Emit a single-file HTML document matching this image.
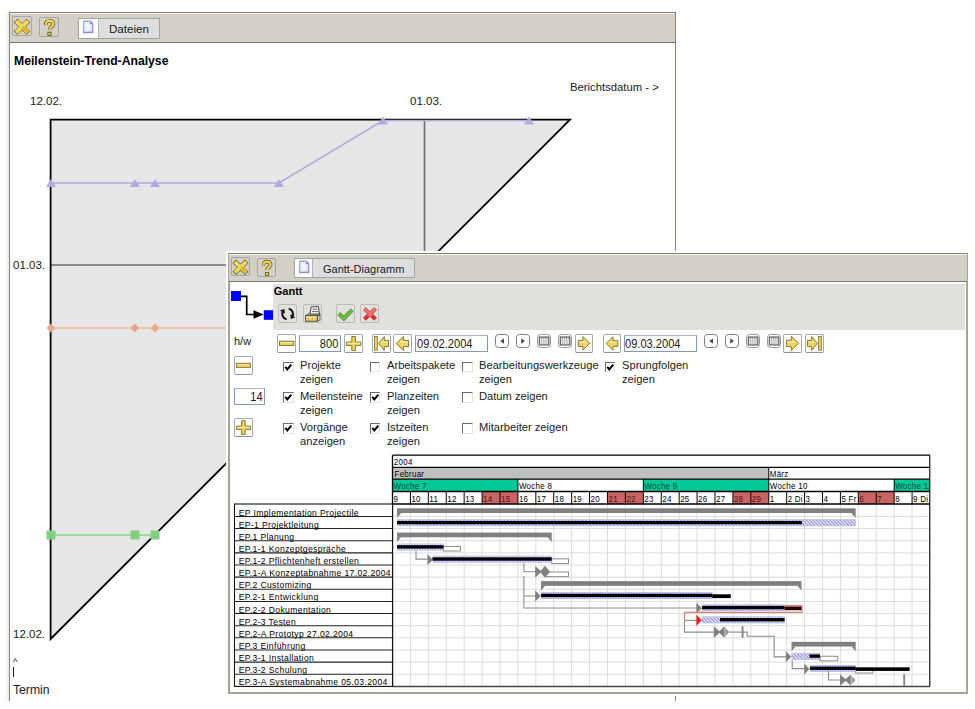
<!DOCTYPE html><html><head><meta charset="utf-8"><style>
*{margin:0;padding:0;box-sizing:border-box}
html,body{width:975px;height:709px;overflow:hidden;background:#fff;font-family:"Liberation Sans",sans-serif;color:#000}
.a{position:absolute}
.tb{background:#d4d0c8}
.btn{position:absolute;border:1px solid #a8a69c;border-radius:2px;background:#d4d0c8}
.t{position:absolute;white-space:nowrap;line-height:1}
svg{position:absolute;left:0;top:0}
</style></head><body>
<div class="a" style="left:9px;top:12px;width:667px;height:689px;border:1px solid #858270;border-left:1.3px solid #8a887a;border-bottom:none;background:#fff"></div><div class="a" style="left:5px;top:12px;width:4px;height:689px;background:linear-gradient(to right,#fdfdfd,#f2f2f2 60%,#e4e4e2)"></div>
<div class="a tb" style="left:10px;top:13px;width:665px;height:30px;border-top:1px solid #f4f2ee;border-bottom:1px solid #7c7a68"></div>
<div class="btn" style="left:12px;top:16px;width:20px;height:20px"></div>
<svg class="a" style="left:12px;top:16px" width="20" height="20" viewBox="0 0 20 20"><path d="M3.6 4.6 L16.4 17 M16.4 4.6 L3.6 17" stroke="#5c5424" stroke-width="5.2"/><path d="M4.1 5.1 L15.9 16.5 M15.9 5.1 L4.1 16.5" stroke="#efda5c" stroke-width="4.2"/><path d="M10.3 11 L15.9 16.5" stroke="#d8bb34" stroke-width="4.2"/></svg>
<div class="btn" style="left:39px;top:17px;width:20px;height:20px"></div>
<svg class="a" style="left:39px;top:17px" width="20" height="20" viewBox="0 0 20 20"><path d="M7 8.2 C6.4 4.8 8.4 3.8 10.2 3.8 C12.8 3.8 14.3 5.1 14.3 7.1 C14.3 9.6 10.6 10.1 10.6 12.6" fill="none" stroke="#5c5424" stroke-width="3.8"/><path d="M7 8.2 C6.4 4.8 8.4 3.8 10.2 3.8 C12.8 3.8 14.3 5.1 14.3 7.1 C14.3 9.6 10.6 10.1 10.6 12.6" fill="none" stroke="#eed550" stroke-width="2.4"/><rect x="8.9" y="15.2" width="3.2" height="3.2" fill="#eed550" stroke="#5c5424" stroke-width="0.9"/></svg>
<div class="a" style="left:78px;top:17.5px;width:82px;height:21px;border:1px solid #a4a4a0;background:#dedede"></div>
<div class="a" style="left:79px;top:18.5px;width:20px;height:19px;background:#fff;border-right:1px solid #b4b4b4"></div>
<svg class="a" style="left:82px;top:19.5px" width="13" height="14" viewBox="0 0 13 14"><defs><linearGradient id="dg78" x1="0" y1="0" x2="1" y2="1"><stop offset="0" stop-color="#ffffff"/><stop offset="0.6" stop-color="#eef0fa"/><stop offset="1" stop-color="#d4d8f4"/></linearGradient></defs><path d="M1.6 1.2 H8.3 L10.8 3.7 V12.2 H1.6 Z" fill="url(#dg78)" stroke="#8080d0" stroke-width="1.1"/><path d="M1.6 12.2 V1.2 H8.3" fill="none" stroke="#90b0e8" stroke-width="1"/><polygon points="8,1 11.2,4.2 8,4.2" fill="#8484d4"/><path d="M1.2 12.8 H11.2" stroke="#7070a8" stroke-width="0.8" opacity="0.6"/></svg>
<div class="t" style="left:109px;top:23.0px;font-size:11.6px;color:#1a1a1a">Dateien</div>
<div class="t" style="left:14px;top:55px;font-size:12.2px;font-weight:bold">Meilenstein-Trend-Analyse</div>
<svg width="975" height="709" style="position:absolute;left:0;top:0"><polygon points="50.6,119.7 570,119.7 50.6,639" fill="#e6e6e6" stroke="none"/><line x1="424.5" y1="120" x2="424.5" y2="265" stroke="#6e6e6e" stroke-width="1.6"/><line x1="50" y1="265" x2="425" y2="265" stroke="#6e6e6e" stroke-width="1.6"/><path d="M50.6,119.7 H570 L50.6,639 Z" fill="none" stroke="#000" stroke-width="1.8" stroke-linejoin="miter"/><polyline points="51,183 135,183 155,183 279,183 383,120.5 529,120.5" fill="none" stroke="#b4a8dc" stroke-width="1.6"/><polygon points="46,187 56,187 51,179" fill="#b4a8dc"/><polygon points="130,187 140,187 135,179" fill="#b4a8dc"/><polygon points="150,187 160,187 155,179" fill="#b4a8dc"/><polygon points="274,187 284,187 279,179" fill="#b4a8dc"/><polygon points="378,124.5 388,124.5 383,116.5" fill="#b4a8dc"/><polygon points="524,124.5 534,124.5 529,116.5" fill="#b4a8dc"/><line x1="51" y1="328" x2="230" y2="328" stroke="#f2bc9c" stroke-width="1.5"/><line x1="55" y1="329.6" x2="230" y2="329.6" stroke="#f0c8b0" stroke-width="1.2" stroke-dasharray="1 7"/><polygon points="46.5,328 51,323.5 55.5,328 51,332.5" fill="#e8a890"/><polygon points="130.5,328 135,323.5 139.5,328 135,332.5" fill="#e8a890"/><polygon points="150.5,328 155,323.5 159.5,328 155,332.5" fill="#e8a890"/><line x1="51" y1="535" x2="155" y2="535" stroke="#88d488" stroke-width="1.6"/><rect x="46.5" y="530.5" width="9" height="9" fill="#80d080"/><rect x="130.5" y="530.5" width="9" height="9" fill="#80d080"/><rect x="150.5" y="530.5" width="9" height="9" fill="#80d080"/></svg>
<div class="t" style="left:30px;top:96.2px;font-size:11.5px;color:#1a1a1a">12.02.</div>
<div class="t" style="left:410px;top:96.2px;font-size:11.5px;color:#1a1a1a">01.03.</div>
<div class="t" style="left:13px;top:259.8px;font-size:11.5px;color:#1a1a1a">01.03.</div>
<div class="t" style="left:13px;top:628.8px;font-size:11.5px;color:#1a1a1a">12.02.</div>
<div class="t" style="left:570px;top:81.6px;font-size:11.3px;color:#1a1a1a">Berichtsdatum - &gt;</div>
<div class="t" style="left:13px;top:684.2px;font-size:12.2px;color:#1a1a1a">Termin</div>
<div class="t" style="left:13px;top:657px;font-size:9.5px;color:#1a1a1a">^</div>
<div class="a" style="left:12.8px;top:667px;width:1.6px;height:10px;background:#222"></div>
<div class="a" style="left:225.5px;top:250.5px;width:745px;height:445.5px;background:#fcfcfc"></div><div class="a" style="left:226.5px;top:251.5px;width:743px;height:443.5px;background:#fff"></div>
<div class="a" style="left:227.8px;top:253px;width:740.7px;height:440.5px;border:2px solid #a6a492;border-top:1px solid #858270;background:#fff"></div>
<div class="a tb" style="left:229px;top:254px;width:738px;height:28px;border-top:1px solid #f4f2ee;border-bottom:1px solid #7c7a68"></div>
<div class="btn" style="left:231px;top:257px;width:19px;height:19px"></div>
<svg class="a" style="left:231px;top:257px" width="19" height="19" viewBox="0 0 20 20"><path d="M3.6 4.6 L16.4 17 M16.4 4.6 L3.6 17" stroke="#5c5424" stroke-width="5.2"/><path d="M4.1 5.1 L15.9 16.5 M15.9 5.1 L4.1 16.5" stroke="#efda5c" stroke-width="4.2"/><path d="M10.3 11 L15.9 16.5" stroke="#d8bb34" stroke-width="4.2"/></svg>
<div class="btn" style="left:257px;top:258px;width:19px;height:19px"></div>
<svg class="a" style="left:257px;top:258px" width="19" height="19" viewBox="0 0 20 20"><path d="M7 8.2 C6.4 4.8 8.4 3.8 10.2 3.8 C12.8 3.8 14.3 5.1 14.3 7.1 C14.3 9.6 10.6 10.1 10.6 12.6" fill="none" stroke="#5c5424" stroke-width="3.8"/><path d="M7 8.2 C6.4 4.8 8.4 3.8 10.2 3.8 C12.8 3.8 14.3 5.1 14.3 7.1 C14.3 9.6 10.6 10.1 10.6 12.6" fill="none" stroke="#eed550" stroke-width="2.4"/><rect x="8.9" y="15.2" width="3.2" height="3.2" fill="#eed550" stroke="#5c5424" stroke-width="0.9"/></svg>
<div class="a" style="left:294px;top:258px;width:121px;height:20px;border:1px solid #a4a4a0;background:#dedede"></div>
<div class="a" style="left:295px;top:259px;width:18px;height:18px;background:#fff;border-right:1px solid #b4b4b4"></div>
<svg class="a" style="left:298px;top:260px" width="13" height="14" viewBox="0 0 13 14"><defs><linearGradient id="dg294" x1="0" y1="0" x2="1" y2="1"><stop offset="0" stop-color="#ffffff"/><stop offset="0.6" stop-color="#eef0fa"/><stop offset="1" stop-color="#d4d8f4"/></linearGradient></defs><path d="M1.6 1.2 H8.3 L10.8 3.7 V12.2 H1.6 Z" fill="url(#dg294)" stroke="#8080d0" stroke-width="1.1"/><path d="M1.6 12.2 V1.2 H8.3" fill="none" stroke="#90b0e8" stroke-width="1"/><polygon points="8,1 11.2,4.2 8,4.2" fill="#8484d4"/><path d="M1.2 12.8 H11.2" stroke="#7070a8" stroke-width="0.8" opacity="0.6"/></svg>
<div class="t" style="left:323px;top:263.5px;font-size:11px;color:#1a1a1a">Gantt-Diagramm</div>
<div class="a" style="left:273px;top:284px;width:692px;height:46px;background:#e0e0dc"></div>
<div class="t" style="left:273.8px;top:286.3px;font-size:11px;font-weight:bold">Gantt</div>
<svg width="975" height="709" style="position:absolute;left:0;top:0"><rect x="231" y="291" width="10" height="10" fill="#0000ff"/><path d="M241 296.4 H246.7 V314.5 H255" fill="none" stroke="#000" stroke-width="1.7"/><polygon points="253.5,310.2 263.8,314.5 253.5,318.8" fill="#000"/><rect x="263.8" y="310.2" width="9.3" height="9.6" fill="#0000ff"/></svg>
<div class="a" style="left:278px;top:303.5px;width:19px;height:19px;border:1px solid #bcbcb4;border-radius:2px;background:#e0e0dc"></div><svg class="a" style="left:278px;top:303.5px" width="19" height="19" viewBox="0 0 19 19"><path d="M8.66 15.32 A5.4 5.4 0 0 1 5.02 7.14" fill="none" stroke="#111" stroke-width="2.1"/><polygon points="6.40,4.93 6.93,9.75 1.84,6.57" fill="#111"/><path d="M10.72 4.72 A5.4 5.4 0 0 1 14.18 12.86" fill="none" stroke="#111" stroke-width="2.1"/><polygon points="12.80,15.07 12.27,10.25 17.36,13.43" fill="#111"/></svg>
<div class="a" style="left:302.5px;top:303.5px;width:19px;height:19px;border:1px solid #bcbcb4;border-radius:2px;background:#e0e0dc"></div><svg class="a" style="left:302.5px;top:303.5px" width="19" height="19" viewBox="0 0 19 19"><path d="M2.6 11.8 L6.4 9.6 H17 V11.2 L14.2 11.8 Z" fill="#c4c4c4" stroke="#333" stroke-width="0.8"/><path d="M8.2 2.8 L15.4 2.6 L16.4 10 L7 10 Z" fill="#f8f8f8" stroke="#333" stroke-width="0.9"/><path d="M9.4 5.2 H14.4 M9 7.6 H15" stroke="#555" stroke-width="0.9"/><path d="M14.2 11.8 L17 11.2 V16 L14.2 17.2 Z" fill="#d8d8d0" stroke="#333" stroke-width="0.7"/><rect x="2.6" y="11.8" width="11.6" height="5.4" fill="#ecd35a" stroke="#333" stroke-width="0.8"/><rect x="3.2" y="12.3" width="10.4" height="1.6" fill="#f6eaa4"/><circle cx="5.4" cy="14.2" r="0.55" fill="#e03050"/><circle cx="9.4" cy="14.2" r="0.55" fill="#e03050"/></svg>
<div class="a" style="left:335.5px;top:303.5px;width:19px;height:19px;border:1px solid #bcbcb4;border-radius:2px;background:#e0e0dc"></div><svg class="a" style="left:335.5px;top:303.5px" width="19" height="19" viewBox="0 0 19 19"><path d="M2.8 9.6 L7.8 14.4 L16.2 5.8" fill="none" stroke="#50602c" stroke-width="4" stroke-linecap="butt"/><path d="M2.8 9.6 L7.8 14.4 L16.2 5.8" fill="none" stroke="#64c040" stroke-width="3.2" stroke-linecap="butt"/></svg>
<div class="a" style="left:360px;top:303.5px;width:19px;height:19px;border:1px solid #bcbcb4;border-radius:2px;background:#e0e0dc"></div><svg class="a" style="left:360px;top:303.5px" width="19" height="19" viewBox="0 0 19 19"><path d="M4.4 4.6 L15.6 15.2 M15.6 4.6 L4.4 15.2" stroke="#a83030" stroke-width="4"/><path d="M4.6 4.8 L15.4 15 M15.4 4.8 L4.6 15" stroke="#f27070" stroke-width="3"/><path d="M4.6 15 L8 11.8 M15.4 15 L12 11.8" stroke="#e82828" stroke-width="3"/></svg>
<div class="t" style="left:234px;top:336px;font-size:11px;color:#1a1a1a">h/w</div>
<div class="a" style="left:277px;top:334px;width:19px;height:19px;border:1px solid #a8a8a8;border-bottom-color:#909090;border-radius:2px;background:#fff"></div><svg class="a" style="left:277px;top:334px" width="19" height="19" viewBox="0 0 19 19"><rect x="2.4" y="7.2" width="14.4" height="4.2" fill="#ecd460" stroke="#7a6c28" stroke-width="0.9"/><rect x="3.4" y="8.1" width="12" height="1.1" fill="#f6eaa8"/></svg>
<div class="a" style="left:299px;top:335px;width:42px;height:17px;border:1px solid #7f9db9;border-top-color:#a8b4c0;background:#fff;color:#1a1a1a"><span style="position:absolute;right:1.6px;top:1.7px;font-size:12.2px;line-height:1;transform:scaleX(0.91);transform-origin:100% 0;white-space:nowrap">800</span></div>
<div class="a" style="left:343.5px;top:334px;width:19px;height:19px;border:1px solid #a8a8a8;border-bottom-color:#909090;border-radius:2px;background:#fff"></div><svg class="a" style="left:343.5px;top:334px" width="19" height="19" viewBox="0 0 19 19"><path d="M7.8 2.5 H11.4 V8 H16.8 V11.6 H11.4 V16.6 H7.8 V11.6 H2.4 V8 H7.8 Z" fill="#ecd460" stroke="#7a6c28" stroke-width="0.9"/><rect x="3.4" y="8.8" width="12.4" height="1" fill="#f6eaa8"/></svg>
<div class="a" style="left:371.5px;top:334px;width:19px;height:19px;border:1px solid #a8a8a8;border-bottom-color:#909090;border-radius:2px;background:#fff"></div><svg class="a" style="left:371.5px;top:334px" width="19" height="19" viewBox="0 0 19 19"><rect x="2.6" y="2.4" width="2.7" height="13.8" fill="#ecd460" stroke="#7a6c28" stroke-width="0.8"/><path d="M6.6 9.4 L12.3 2.5 V6.4 H16.5 V12.6 H12.3 V16.4 Z" fill="#ecd460" stroke="#7a6c28" stroke-width="0.9"/><path d="M9.5 8 H15.5" stroke="#f6eaa8" stroke-width="1.4"/></svg>
<div class="a" style="left:393px;top:334px;width:19px;height:19px;border:1px solid #a8a8a8;border-bottom-color:#909090;border-radius:2px;background:#fff"></div><svg class="a" style="left:393px;top:334px" width="19" height="19" viewBox="0 0 19 19"><path d="M3.2 9.4 L10.6 2.4 V6.4 H15.6 V12.6 H10.6 V16.5 Z" fill="#ecd460" stroke="#7a6c28" stroke-width="0.9"/><path d="M7 8 H14.6" stroke="#f6eaa8" stroke-width="1.4"/></svg>
<div class="a" style="left:415px;top:335px;width:73px;height:17px;border:1px solid #7f9db9;border-top-color:#a8b4c0;background:#fff;color:#1a1a1a"><span style="position:absolute;left:0.9px;top:1.7px;font-size:12.2px;line-height:1;transform:scaleX(0.91);transform-origin:0 0;white-space:nowrap">09.02.2004</span></div>
<div class="a" style="left:495px;top:334px;width:14px;height:14px;border:1.3px solid #7c7c7c;border-radius:3.5px;background:#fff"></div><svg class="a" style="left:495px;top:334px" width="14" height="14" viewBox="0 0 14 14"><polygon points="9,4.4 5.2,7.1 9,9.8" fill="#4a4a4a"/></svg>
<div class="a" style="left:515.5px;top:334px;width:14px;height:14px;border:1.3px solid #7c7c7c;border-radius:3.5px;background:#fff"></div><svg class="a" style="left:515.5px;top:334px" width="14" height="14" viewBox="0 0 14 14"><polygon points="5.2,4.4 9,7.1 5.2,9.8" fill="#4a4a4a"/></svg>
<div class="a" style="left:536.5px;top:334px;width:14px;height:14px;border:1.6px solid #9a9a9a;border-radius:3.5px;background:#fff"></div><svg class="a" style="left:536.5px;top:334px" width="14" height="14" viewBox="0 0 14 14"><rect x="2.3" y="3" width="9.6" height="8" fill="#a8a8a8" stroke="#5c5c5c" stroke-width="1.1"/><path d="M3.8 5 V10.3 M5.9 5 V10.3 M8 5 V10.3 M10.1 5 V10.3" stroke="#fafafa" stroke-width="1.1"/><path d="M3 4.4 H11.2" stroke="#f4f4f4" stroke-width="0.9" stroke-dasharray="1 1"/></svg>
<div class="a" style="left:557.5px;top:334px;width:14px;height:14px;border:1.6px solid #9a9a9a;border-radius:3.5px;background:#fff"></div><svg class="a" style="left:557.5px;top:334px" width="14" height="14" viewBox="0 0 14 14"><rect x="2.3" y="3" width="9.6" height="8" fill="#a8a8a8" stroke="#5c5c5c" stroke-width="1.1"/><path d="M3.8 5 V10.3 M5.9 5 V10.3 M8 5 V10.3 M10.1 5 V10.3" stroke="#fafafa" stroke-width="1.1"/><path d="M3 4.4 H11.2" stroke="#f4f4f4" stroke-width="0.9" stroke-dasharray="1 1"/></svg>
<div class="a" style="left:574.5px;top:334px;width:18px;height:19px;border:1px solid #a8a8a8;border-bottom-color:#909090;border-radius:2px;background:#fff"></div><svg class="a" style="left:574.5px;top:334px" width="18" height="19" viewBox="0 0 19 19"><path d="M15.6 9.2 L8.3 2.2 V6.2 H3.4 V12.6 H8.3 V16.6 Z" fill="#ecd460" stroke="#7a6c28" stroke-width="0.9"/><path d="M4.4 8 H12" stroke="#f6eaa8" stroke-width="1.4"/></svg>
<div class="a" style="left:602.5px;top:334px;width:18px;height:19px;border:1px solid #a8a8a8;border-bottom-color:#909090;border-radius:2px;background:#fff"></div><svg class="a" style="left:602.5px;top:334px" width="18" height="19" viewBox="0 0 19 19"><path d="M3.2 9.4 L10.6 2.4 V6.4 H15.6 V12.6 H10.6 V16.5 Z" fill="#ecd460" stroke="#7a6c28" stroke-width="0.9"/><path d="M7 8 H14.6" stroke="#f6eaa8" stroke-width="1.4"/></svg>
<div class="a" style="left:623.5px;top:335px;width:73px;height:17px;border:1px solid #7f9db9;border-top-color:#a8b4c0;background:#fff;color:#1a1a1a"><span style="position:absolute;left:0.9px;top:1.7px;font-size:12.2px;line-height:1;transform:scaleX(0.91);transform-origin:0 0;white-space:nowrap">09.03.2004</span></div>
<div class="a" style="left:704px;top:334px;width:14px;height:14px;border:1.3px solid #7c7c7c;border-radius:3.5px;background:#fff"></div><svg class="a" style="left:704px;top:334px" width="14" height="14" viewBox="0 0 14 14"><polygon points="9,4.4 5.2,7.1 9,9.8" fill="#4a4a4a"/></svg>
<div class="a" style="left:724.5px;top:334px;width:14px;height:14px;border:1.3px solid #7c7c7c;border-radius:3.5px;background:#fff"></div><svg class="a" style="left:724.5px;top:334px" width="14" height="14" viewBox="0 0 14 14"><polygon points="5.2,4.4 9,7.1 5.2,9.8" fill="#4a4a4a"/></svg>
<div class="a" style="left:745.5px;top:334px;width:14px;height:14px;border:1.6px solid #9a9a9a;border-radius:3.5px;background:#fff"></div><svg class="a" style="left:745.5px;top:334px" width="14" height="14" viewBox="0 0 14 14"><rect x="2.3" y="3" width="9.6" height="8" fill="#a8a8a8" stroke="#5c5c5c" stroke-width="1.1"/><path d="M3.8 5 V10.3 M5.9 5 V10.3 M8 5 V10.3 M10.1 5 V10.3" stroke="#fafafa" stroke-width="1.1"/><path d="M3 4.4 H11.2" stroke="#f4f4f4" stroke-width="0.9" stroke-dasharray="1 1"/></svg>
<div class="a" style="left:766.5px;top:334px;width:14px;height:14px;border:1.6px solid #9a9a9a;border-radius:3.5px;background:#fff"></div><svg class="a" style="left:766.5px;top:334px" width="14" height="14" viewBox="0 0 14 14"><rect x="2.3" y="3" width="9.6" height="8" fill="#a8a8a8" stroke="#5c5c5c" stroke-width="1.1"/><path d="M3.8 5 V10.3 M5.9 5 V10.3 M8 5 V10.3 M10.1 5 V10.3" stroke="#fafafa" stroke-width="1.1"/><path d="M3 4.4 H11.2" stroke="#f4f4f4" stroke-width="0.9" stroke-dasharray="1 1"/></svg>
<div class="a" style="left:783px;top:334px;width:19px;height:19px;border:1px solid #a8a8a8;border-bottom-color:#909090;border-radius:2px;background:#fff"></div><svg class="a" style="left:783px;top:334px" width="19" height="19" viewBox="0 0 19 19"><path d="M15.6 9.2 L8.3 2.2 V6.2 H3.4 V12.6 H8.3 V16.6 Z" fill="#ecd460" stroke="#7a6c28" stroke-width="0.9"/><path d="M4.4 8 H12" stroke="#f6eaa8" stroke-width="1.4"/></svg>
<div class="a" style="left:805px;top:334px;width:19px;height:19px;border:1px solid #a8a8a8;border-bottom-color:#909090;border-radius:2px;background:#fff"></div><svg class="a" style="left:805px;top:334px" width="19" height="19" viewBox="0 0 19 19"><rect x="13.6" y="2.4" width="2.7" height="13.8" fill="#ecd460" stroke="#7a6c28" stroke-width="0.8"/><path d="M12.4 9.4 L6.7 2.5 V6.4 H2.5 V12.6 H6.7 V16.4 Z" fill="#ecd460" stroke="#7a6c28" stroke-width="0.9"/><path d="M3.5 8 H9.5" stroke="#f6eaa8" stroke-width="1.4"/></svg>
<div class="a" style="left:234px;top:356px;width:18.5px;height:19px;border:1px solid #a8a8a8;border-bottom-color:#909090;border-radius:2px;background:#fff"></div><svg class="a" style="left:234px;top:356px" width="18.5" height="19" viewBox="0 0 19 19"><rect x="2.4" y="7.2" width="14.4" height="4.2" fill="#ecd460" stroke="#7a6c28" stroke-width="0.9"/><rect x="3.4" y="8.1" width="12" height="1.1" fill="#f6eaa8"/></svg>
<div class="a" style="left:234px;top:388px;width:31px;height:17px;border:1px solid #7f9db9;border-top-color:#a8b4c0;background:#fff;color:#1a1a1a"><span style="position:absolute;right:1.6px;top:1.7px;font-size:12.2px;line-height:1;transform:scaleX(0.91);transform-origin:100% 0;white-space:nowrap">14</span></div>
<div class="a" style="left:234px;top:418px;width:18.5px;height:19px;border:1px solid #a8a8a8;border-bottom-color:#909090;border-radius:2px;background:#fff"></div><svg class="a" style="left:234px;top:418px" width="18.5" height="19" viewBox="0 0 19 19"><path d="M7.8 2.5 H11.4 V8 H16.8 V11.6 H11.4 V16.6 H7.8 V11.6 H2.4 V8 H7.8 Z" fill="#ecd460" stroke="#7a6c28" stroke-width="0.9"/><rect x="3.4" y="8.8" width="12.4" height="1" fill="#f6eaa8"/></svg>
<div class="a" style="left:283px;top:361.5px;width:10.5px;height:10.5px;border:1px solid #e6e6e2;border-top:1.6px solid #6c6c6c;border-left:1.6px solid #6c6c6c;background:#fff"></div><svg class="a" style="left:283px;top:361.5px" width="11" height="11" viewBox="0 0 11 11"><path d="M2.3 4.8 L4.3 7.4 L8.3 2.6" fill="none" stroke="#000" stroke-width="2"/></svg>
<div class="t" style="left:300px;top:359.3px;font-size:11.8px;line-height:13.6px;transform:scaleX(0.945);transform-origin:0 0;color:#1a1a1a">Projekte<br>zeigen</div>
<div class="a" style="left:369.5px;top:361.5px;width:10.5px;height:10.5px;border:1px solid #e6e6e2;border-top:1.6px solid #6c6c6c;border-left:1.6px solid #6c6c6c;background:#fff"></div><svg class="a" style="left:369.5px;top:361.5px" width="11" height="11" viewBox="0 0 11 11"></svg>
<div class="t" style="left:386.5px;top:359.3px;font-size:11.8px;line-height:13.6px;transform:scaleX(0.945);transform-origin:0 0;color:#1a1a1a">Arbeitspakete<br>zeigen</div>
<div class="a" style="left:462px;top:361.5px;width:10.5px;height:10.5px;border:1px solid #e6e6e2;border-top:1.6px solid #6c6c6c;border-left:1.6px solid #6c6c6c;background:#fff"></div><svg class="a" style="left:462px;top:361.5px" width="11" height="11" viewBox="0 0 11 11"></svg>
<div class="t" style="left:479px;top:359.3px;font-size:11.8px;line-height:13.6px;transform:scaleX(0.945);transform-origin:0 0;color:#1a1a1a">Bearbeitungswerkzeuge<br>zeigen</div>
<div class="a" style="left:604.5px;top:361.5px;width:10.5px;height:10.5px;border:1px solid #e6e6e2;border-top:1.6px solid #6c6c6c;border-left:1.6px solid #6c6c6c;background:#fff"></div><svg class="a" style="left:604.5px;top:361.5px" width="11" height="11" viewBox="0 0 11 11"><path d="M2.3 4.8 L4.3 7.4 L8.3 2.6" fill="none" stroke="#000" stroke-width="2"/></svg>
<div class="t" style="left:621.5px;top:359.3px;font-size:11.8px;line-height:13.6px;transform:scaleX(0.945);transform-origin:0 0;color:#1a1a1a">Sprungfolgen<br>zeigen</div>
<div class="a" style="left:283px;top:392.4px;width:10.5px;height:10.5px;border:1px solid #e6e6e2;border-top:1.6px solid #6c6c6c;border-left:1.6px solid #6c6c6c;background:#fff"></div><svg class="a" style="left:283px;top:392.4px" width="11" height="11" viewBox="0 0 11 11"><path d="M2.3 4.8 L4.3 7.4 L8.3 2.6" fill="none" stroke="#000" stroke-width="2"/></svg>
<div class="t" style="left:300px;top:390.2px;font-size:11.8px;line-height:13.6px;transform:scaleX(0.945);transform-origin:0 0;color:#1a1a1a">Meilensteine<br>zeigen</div>
<div class="a" style="left:369.5px;top:392.4px;width:10.5px;height:10.5px;border:1px solid #e6e6e2;border-top:1.6px solid #6c6c6c;border-left:1.6px solid #6c6c6c;background:#fff"></div><svg class="a" style="left:369.5px;top:392.4px" width="11" height="11" viewBox="0 0 11 11"><path d="M2.3 4.8 L4.3 7.4 L8.3 2.6" fill="none" stroke="#000" stroke-width="2"/></svg>
<div class="t" style="left:386.5px;top:390.2px;font-size:11.8px;line-height:13.6px;transform:scaleX(0.945);transform-origin:0 0;color:#1a1a1a">Planzeiten<br>zeigen</div>
<div class="a" style="left:462px;top:392.4px;width:10.5px;height:10.5px;border:1px solid #e6e6e2;border-top:1.6px solid #6c6c6c;border-left:1.6px solid #6c6c6c;background:#fff"></div><svg class="a" style="left:462px;top:392.4px" width="11" height="11" viewBox="0 0 11 11"></svg>
<div class="t" style="left:479px;top:390.2px;font-size:11.8px;line-height:13.6px;transform:scaleX(0.945);transform-origin:0 0;color:#1a1a1a">Datum zeigen</div>
<div class="a" style="left:283px;top:423.3px;width:10.5px;height:10.5px;border:1px solid #e6e6e2;border-top:1.6px solid #6c6c6c;border-left:1.6px solid #6c6c6c;background:#fff"></div><svg class="a" style="left:283px;top:423.3px" width="11" height="11" viewBox="0 0 11 11"><path d="M2.3 4.8 L4.3 7.4 L8.3 2.6" fill="none" stroke="#000" stroke-width="2"/></svg>
<div class="t" style="left:300px;top:421.1px;font-size:11.8px;line-height:13.6px;transform:scaleX(0.945);transform-origin:0 0;color:#1a1a1a">Vorg&auml;nge<br>anzeigen</div>
<div class="a" style="left:369.5px;top:423.3px;width:10.5px;height:10.5px;border:1px solid #e6e6e2;border-top:1.6px solid #6c6c6c;border-left:1.6px solid #6c6c6c;background:#fff"></div><svg class="a" style="left:369.5px;top:423.3px" width="11" height="11" viewBox="0 0 11 11"><path d="M2.3 4.8 L4.3 7.4 L8.3 2.6" fill="none" stroke="#000" stroke-width="2"/></svg>
<div class="t" style="left:386.5px;top:421.1px;font-size:11.8px;line-height:13.6px;transform:scaleX(0.945);transform-origin:0 0;color:#1a1a1a">Istzeiten<br>zeigen</div>
<div class="a" style="left:462px;top:423.3px;width:10.5px;height:10.5px;border:1px solid #e6e6e2;border-top:1.6px solid #6c6c6c;border-left:1.6px solid #6c6c6c;background:#fff"></div><svg class="a" style="left:462px;top:423.3px" width="11" height="11" viewBox="0 0 11 11"></svg>
<div class="t" style="left:479px;top:421.1px;font-size:11.8px;line-height:13.6px;transform:scaleX(0.945);transform-origin:0 0;color:#1a1a1a">Mitarbeiter zeigen</div>
<svg width="975" height="709" style="position:absolute;left:0;top:0" font-family="Liberation Sans" font-size="8"><defs><pattern id="hatch" width="2.4" height="3" patternUnits="userSpaceOnUse" patternTransform="rotate(-45)"><rect width="3" height="3" fill="#fff"/><rect width="1.3" height="3" fill="#8c8cd8"/></pattern></defs><line x1="410.42" y1="504.0" x2="410.42" y2="686.4" stroke="#dcdcdc" stroke-width="1"/><line x1="428.33" y1="504.0" x2="428.33" y2="686.4" stroke="#dcdcdc" stroke-width="1"/><line x1="446.25" y1="504.0" x2="446.25" y2="686.4" stroke="#dcdcdc" stroke-width="1"/><line x1="464.17" y1="504.0" x2="464.17" y2="686.4" stroke="#dcdcdc" stroke-width="1"/><line x1="482.08" y1="504.0" x2="482.08" y2="686.4" stroke="#dcdcdc" stroke-width="1"/><line x1="500.00" y1="504.0" x2="500.00" y2="686.4" stroke="#dcdcdc" stroke-width="1"/><line x1="517.92" y1="504.0" x2="517.92" y2="686.4" stroke="#dcdcdc" stroke-width="1"/><line x1="535.83" y1="504.0" x2="535.83" y2="686.4" stroke="#dcdcdc" stroke-width="1"/><line x1="553.75" y1="504.0" x2="553.75" y2="686.4" stroke="#dcdcdc" stroke-width="1"/><line x1="571.67" y1="504.0" x2="571.67" y2="686.4" stroke="#dcdcdc" stroke-width="1"/><line x1="589.58" y1="504.0" x2="589.58" y2="686.4" stroke="#dcdcdc" stroke-width="1"/><line x1="607.50" y1="504.0" x2="607.50" y2="686.4" stroke="#dcdcdc" stroke-width="1"/><line x1="625.42" y1="504.0" x2="625.42" y2="686.4" stroke="#dcdcdc" stroke-width="1"/><line x1="643.33" y1="504.0" x2="643.33" y2="686.4" stroke="#dcdcdc" stroke-width="1"/><line x1="661.25" y1="504.0" x2="661.25" y2="686.4" stroke="#dcdcdc" stroke-width="1"/><line x1="679.17" y1="504.0" x2="679.17" y2="686.4" stroke="#dcdcdc" stroke-width="1"/><line x1="697.08" y1="504.0" x2="697.08" y2="686.4" stroke="#dcdcdc" stroke-width="1"/><line x1="715.00" y1="504.0" x2="715.00" y2="686.4" stroke="#dcdcdc" stroke-width="1"/><line x1="732.92" y1="504.0" x2="732.92" y2="686.4" stroke="#dcdcdc" stroke-width="1"/><line x1="750.83" y1="504.0" x2="750.83" y2="686.4" stroke="#dcdcdc" stroke-width="1"/><line x1="768.75" y1="504.0" x2="768.75" y2="686.4" stroke="#dcdcdc" stroke-width="1"/><line x1="786.67" y1="504.0" x2="786.67" y2="686.4" stroke="#dcdcdc" stroke-width="1"/><line x1="804.58" y1="504.0" x2="804.58" y2="686.4" stroke="#dcdcdc" stroke-width="1"/><line x1="822.50" y1="504.0" x2="822.50" y2="686.4" stroke="#dcdcdc" stroke-width="1"/><line x1="840.42" y1="504.0" x2="840.42" y2="686.4" stroke="#dcdcdc" stroke-width="1"/><line x1="858.33" y1="504.0" x2="858.33" y2="686.4" stroke="#dcdcdc" stroke-width="1"/><line x1="876.25" y1="504.0" x2="876.25" y2="686.4" stroke="#dcdcdc" stroke-width="1"/><line x1="894.17" y1="504.0" x2="894.17" y2="686.4" stroke="#dcdcdc" stroke-width="1"/><line x1="912.08" y1="504.0" x2="912.08" y2="686.4" stroke="#dcdcdc" stroke-width="1"/><line x1="392.5" y1="516.44" x2="930.0" y2="516.44" stroke="#dcdcdc" stroke-width="1"/><line x1="392.5" y1="528.58" x2="930.0" y2="528.58" stroke="#dcdcdc" stroke-width="1"/><line x1="392.5" y1="540.72" x2="930.0" y2="540.72" stroke="#dcdcdc" stroke-width="1"/><line x1="392.5" y1="552.86" x2="930.0" y2="552.86" stroke="#dcdcdc" stroke-width="1"/><line x1="392.5" y1="565.00" x2="930.0" y2="565.00" stroke="#dcdcdc" stroke-width="1"/><line x1="392.5" y1="577.14" x2="930.0" y2="577.14" stroke="#dcdcdc" stroke-width="1"/><line x1="392.5" y1="589.28" x2="930.0" y2="589.28" stroke="#dcdcdc" stroke-width="1"/><line x1="392.5" y1="601.42" x2="930.0" y2="601.42" stroke="#dcdcdc" stroke-width="1"/><line x1="392.5" y1="613.56" x2="930.0" y2="613.56" stroke="#dcdcdc" stroke-width="1"/><line x1="392.5" y1="625.70" x2="930.0" y2="625.70" stroke="#dcdcdc" stroke-width="1"/><line x1="392.5" y1="637.84" x2="930.0" y2="637.84" stroke="#dcdcdc" stroke-width="1"/><line x1="392.5" y1="649.98" x2="930.0" y2="649.98" stroke="#dcdcdc" stroke-width="1"/><line x1="392.5" y1="662.12" x2="930.0" y2="662.12" stroke="#dcdcdc" stroke-width="1"/><line x1="392.5" y1="674.26" x2="930.0" y2="674.26" stroke="#dcdcdc" stroke-width="1"/><rect x="392.5" y="455.2" width="537.5" height="12.199999999999989" fill="#fff"/><rect x="392.5" y="467.4" width="376.25" height="11.800000000000011" fill="#c0c0c0"/><rect x="392.50" y="479.2" width="125.42" height="12.300000000000011" fill="#00c896"/><rect x="517.92" y="479.2" width="125.42" height="12.300000000000011" fill="#fff"/><rect x="643.33" y="479.2" width="125.42" height="12.300000000000011" fill="#00c896"/><rect x="768.75" y="479.2" width="125.42" height="12.300000000000011" fill="#fff"/><rect x="894.17" y="479.2" width="35.83" height="12.300000000000011" fill="#00c896"/><rect x="482.08" y="491.5" width="17.92" height="12.5" fill="#c86464"/><rect x="500.00" y="491.5" width="17.92" height="12.5" fill="#c86464"/><rect x="607.50" y="491.5" width="17.92" height="12.5" fill="#c86464"/><rect x="625.42" y="491.5" width="17.92" height="12.5" fill="#c86464"/><rect x="732.92" y="491.5" width="17.92" height="12.5" fill="#c86464"/><rect x="750.83" y="491.5" width="17.92" height="12.5" fill="#c86464"/><rect x="858.33" y="491.5" width="17.92" height="12.5" fill="#c86464"/><rect x="876.25" y="491.5" width="17.92" height="12.5" fill="#c86464"/><line x1="392.5" y1="455.2" x2="930.0" y2="455.2" stroke="#000" stroke-width="1.3"/><line x1="392.5" y1="467.4" x2="930.0" y2="467.4" stroke="#000" stroke-width="1.3"/><line x1="392.5" y1="479.2" x2="930.0" y2="479.2" stroke="#000" stroke-width="1.3"/><line x1="392.5" y1="491.5" x2="930.0" y2="491.5" stroke="#000" stroke-width="1.3"/><line x1="392.5" y1="504.0" x2="930.0" y2="504.0" stroke="#000" stroke-width="1.3"/><line x1="392.5" y1="455.2" x2="392.5" y2="686.4" stroke="#000" stroke-width="1.3"/><line x1="929.8" y1="455.2" x2="929.8" y2="686.4" stroke="#000" stroke-width="1.1"/><line x1="768.75" y1="467.4" x2="768.75" y2="479.2" stroke="#000" stroke-width="1"/><line x1="517.92" y1="479.2" x2="517.92" y2="491.5" stroke="#000" stroke-width="1"/><line x1="643.33" y1="479.2" x2="643.33" y2="491.5" stroke="#000" stroke-width="1"/><line x1="768.75" y1="479.2" x2="768.75" y2="491.5" stroke="#000" stroke-width="1"/><line x1="894.17" y1="479.2" x2="894.17" y2="491.5" stroke="#000" stroke-width="1"/><line x1="410.42" y1="491.5" x2="410.42" y2="504.0" stroke="#000" stroke-width="1"/><line x1="428.33" y1="491.5" x2="428.33" y2="504.0" stroke="#000" stroke-width="1"/><line x1="446.25" y1="491.5" x2="446.25" y2="504.0" stroke="#000" stroke-width="1"/><line x1="464.17" y1="491.5" x2="464.17" y2="504.0" stroke="#000" stroke-width="1"/><line x1="482.08" y1="491.5" x2="482.08" y2="504.0" stroke="#000" stroke-width="1"/><line x1="500.00" y1="491.5" x2="500.00" y2="504.0" stroke="#000" stroke-width="1"/><line x1="517.92" y1="491.5" x2="517.92" y2="504.0" stroke="#000" stroke-width="1"/><line x1="535.83" y1="491.5" x2="535.83" y2="504.0" stroke="#000" stroke-width="1"/><line x1="553.75" y1="491.5" x2="553.75" y2="504.0" stroke="#000" stroke-width="1"/><line x1="571.67" y1="491.5" x2="571.67" y2="504.0" stroke="#000" stroke-width="1"/><line x1="589.58" y1="491.5" x2="589.58" y2="504.0" stroke="#000" stroke-width="1"/><line x1="607.50" y1="491.5" x2="607.50" y2="504.0" stroke="#000" stroke-width="1"/><line x1="625.42" y1="491.5" x2="625.42" y2="504.0" stroke="#000" stroke-width="1"/><line x1="643.33" y1="491.5" x2="643.33" y2="504.0" stroke="#000" stroke-width="1"/><line x1="661.25" y1="491.5" x2="661.25" y2="504.0" stroke="#000" stroke-width="1"/><line x1="679.17" y1="491.5" x2="679.17" y2="504.0" stroke="#000" stroke-width="1"/><line x1="697.08" y1="491.5" x2="697.08" y2="504.0" stroke="#000" stroke-width="1"/><line x1="715.00" y1="491.5" x2="715.00" y2="504.0" stroke="#000" stroke-width="1"/><line x1="732.92" y1="491.5" x2="732.92" y2="504.0" stroke="#000" stroke-width="1"/><line x1="750.83" y1="491.5" x2="750.83" y2="504.0" stroke="#000" stroke-width="1"/><line x1="768.75" y1="491.5" x2="768.75" y2="504.0" stroke="#000" stroke-width="1"/><line x1="786.67" y1="491.5" x2="786.67" y2="504.0" stroke="#000" stroke-width="1"/><line x1="804.58" y1="491.5" x2="804.58" y2="504.0" stroke="#000" stroke-width="1"/><line x1="822.50" y1="491.5" x2="822.50" y2="504.0" stroke="#000" stroke-width="1"/><line x1="840.42" y1="491.5" x2="840.42" y2="504.0" stroke="#000" stroke-width="1"/><line x1="858.33" y1="491.5" x2="858.33" y2="504.0" stroke="#000" stroke-width="1"/><line x1="876.25" y1="491.5" x2="876.25" y2="504.0" stroke="#000" stroke-width="1"/><line x1="894.17" y1="491.5" x2="894.17" y2="504.0" stroke="#000" stroke-width="1"/><line x1="912.08" y1="491.5" x2="912.08" y2="504.0" stroke="#000" stroke-width="1"/><line x1="392.5" y1="686.4" x2="930.0" y2="686.4" stroke="#444" stroke-width="1.5"/><text transform="translate(393.80 464.80) scale(0.86 1)" font-size="9.3" fill="#000" letter-spacing="0.3" >2004</text><text transform="translate(394.50 476.60) scale(0.86 1)" font-size="9.3" fill="#000" letter-spacing="0.3" >Februar</text><text transform="translate(769.75 476.60) scale(0.86 1)" font-size="9.3" fill="#000" letter-spacing="0.3" >M&auml;rz</text><text transform="translate(393.50 488.90) scale(0.86 1)" font-size="9.3" fill="#0a4a3a" letter-spacing="0.3" >Woche 7</text><text transform="translate(518.92 488.90) scale(0.86 1)" font-size="9.3" fill="#000" letter-spacing="0.3" >Woche 8</text><text transform="translate(644.33 488.90) scale(0.86 1)" font-size="9.3" fill="#0a4a3a" letter-spacing="0.3" >Woche 9</text><text transform="translate(769.75 488.90) scale(0.86 1)" font-size="9.3" fill="#000" letter-spacing="0.3" >Woche 10</text><svg x="894.17" y="479.2" width="35.83" height="12.300000000000011" overflow="hidden"><text transform="translate(1.00 9.70) scale(0.86 1)" font-size="9.3" fill="#0a4a3a" letter-spacing="0.3" >Woche 11</text></svg><text transform="translate(393.50 501.80) scale(0.86 1)" font-size="9.3" fill="#000" letter-spacing="0.3" >9</text><text transform="translate(411.42 501.80) scale(0.86 1)" font-size="9.3" fill="#000" letter-spacing="0.3" >10</text><text transform="translate(429.33 501.80) scale(0.86 1)" font-size="9.3" fill="#000" letter-spacing="0.3" >11</text><text transform="translate(447.25 501.80) scale(0.86 1)" font-size="9.3" fill="#000" letter-spacing="0.3" >12</text><text transform="translate(465.17 501.80) scale(0.86 1)" font-size="9.3" fill="#000" letter-spacing="0.3" >13</text><text transform="translate(483.08 501.80) scale(0.86 1)" font-size="9.3" fill="#5a1010" letter-spacing="0.3" >14</text><text transform="translate(501.00 501.80) scale(0.86 1)" font-size="9.3" fill="#5a1010" letter-spacing="0.3" >15</text><text transform="translate(518.92 501.80) scale(0.86 1)" font-size="9.3" fill="#000" letter-spacing="0.3" >16</text><text transform="translate(536.83 501.80) scale(0.86 1)" font-size="9.3" fill="#000" letter-spacing="0.3" >17</text><text transform="translate(554.75 501.80) scale(0.86 1)" font-size="9.3" fill="#000" letter-spacing="0.3" >18</text><text transform="translate(572.67 501.80) scale(0.86 1)" font-size="9.3" fill="#000" letter-spacing="0.3" >19</text><text transform="translate(590.58 501.80) scale(0.86 1)" font-size="9.3" fill="#000" letter-spacing="0.3" >20</text><text transform="translate(608.50 501.80) scale(0.86 1)" font-size="9.3" fill="#5a1010" letter-spacing="0.3" >21</text><text transform="translate(626.42 501.80) scale(0.86 1)" font-size="9.3" fill="#5a1010" letter-spacing="0.3" >22</text><text transform="translate(644.33 501.80) scale(0.86 1)" font-size="9.3" fill="#000" letter-spacing="0.3" >23</text><text transform="translate(662.25 501.80) scale(0.86 1)" font-size="9.3" fill="#000" letter-spacing="0.3" >24</text><text transform="translate(680.17 501.80) scale(0.86 1)" font-size="9.3" fill="#000" letter-spacing="0.3" >25</text><text transform="translate(698.08 501.80) scale(0.86 1)" font-size="9.3" fill="#000" letter-spacing="0.3" >26</text><text transform="translate(716.00 501.80) scale(0.86 1)" font-size="9.3" fill="#000" letter-spacing="0.3" >27</text><text transform="translate(733.92 501.80) scale(0.86 1)" font-size="9.3" fill="#5a1010" letter-spacing="0.3" >28</text><text transform="translate(751.83 501.80) scale(0.86 1)" font-size="9.3" fill="#5a1010" letter-spacing="0.3" >29</text><text transform="translate(769.75 501.80) scale(0.86 1)" font-size="9.3" fill="#000" letter-spacing="0.3" >1</text><text transform="translate(787.67 501.80) scale(0.86 1)" font-size="9.3" fill="#000" letter-spacing="0.3" >2 Di</text><text transform="translate(805.58 501.80) scale(0.86 1)" font-size="9.3" fill="#000" letter-spacing="0.3" >3</text><text transform="translate(823.50 501.80) scale(0.86 1)" font-size="9.3" fill="#000" letter-spacing="0.3" >4</text><text transform="translate(841.42 501.80) scale(0.86 1)" font-size="9.3" fill="#000" letter-spacing="0.3" >5 Fr</text><text transform="translate(859.33 501.80) scale(0.86 1)" font-size="9.3" fill="#5a1010" letter-spacing="0.3" >6</text><text transform="translate(877.25 501.80) scale(0.86 1)" font-size="9.3" fill="#5a1010" letter-spacing="0.3" >7</text><text transform="translate(895.17 501.80) scale(0.86 1)" font-size="9.3" fill="#000" letter-spacing="0.3" >8</text><text transform="translate(913.08 501.80) scale(0.86 1)" font-size="9.3" fill="#000" letter-spacing="0.3" >9 Di</text><rect x="234.5" y="504.0" width="158.0" height="182.39999999999998" fill="#fff" stroke="#111" stroke-width="1.1"/><line x1="234.5" y1="516.44" x2="392.5" y2="516.44" stroke="#222" stroke-width="1.05"/><line x1="234.5" y1="528.58" x2="392.5" y2="528.58" stroke="#222" stroke-width="1.05"/><line x1="234.5" y1="540.72" x2="392.5" y2="540.72" stroke="#222" stroke-width="1.05"/><line x1="234.5" y1="552.86" x2="392.5" y2="552.86" stroke="#222" stroke-width="1.05"/><line x1="234.5" y1="565.00" x2="392.5" y2="565.00" stroke="#222" stroke-width="1.05"/><line x1="234.5" y1="577.14" x2="392.5" y2="577.14" stroke="#222" stroke-width="1.05"/><line x1="234.5" y1="589.28" x2="392.5" y2="589.28" stroke="#222" stroke-width="1.05"/><line x1="234.5" y1="601.42" x2="392.5" y2="601.42" stroke="#222" stroke-width="1.05"/><line x1="234.5" y1="613.56" x2="392.5" y2="613.56" stroke="#222" stroke-width="1.05"/><line x1="234.5" y1="625.70" x2="392.5" y2="625.70" stroke="#222" stroke-width="1.05"/><line x1="234.5" y1="637.84" x2="392.5" y2="637.84" stroke="#222" stroke-width="1.05"/><line x1="234.5" y1="649.98" x2="392.5" y2="649.98" stroke="#222" stroke-width="1.05"/><line x1="234.5" y1="662.12" x2="392.5" y2="662.12" stroke="#222" stroke-width="1.05"/><line x1="234.5" y1="674.26" x2="392.5" y2="674.26" stroke="#222" stroke-width="1.05"/><svg x="234.5" y="504.0" width="158.0" height="182.39999999999998" overflow="hidden"><text x="4.20" y="11.50" fill="#000" font-size="8.6" letter-spacing="0.36">EP Implementation Projectile</text><text x="4.20" y="23.64" fill="#000" font-size="8.6" letter-spacing="0.36">EP-1 Projektleitung</text><text x="4.20" y="35.78" fill="#000" font-size="8.6" letter-spacing="0.36">EP.1 Planung</text><text x="4.20" y="47.92" fill="#000" font-size="8.6" letter-spacing="0.36">EP.1-1 Konzeptgespr&auml;che</text><text x="4.20" y="60.06" fill="#000" font-size="8.6" letter-spacing="0.36">EP.1-2 Pflichtenheft erstellen</text><text x="4.20" y="72.20" fill="#000" font-size="8.6" letter-spacing="0.36">EP.1-A Konzeptabnahme 17.02.2004</text><text x="4.20" y="84.34" fill="#000" font-size="8.6" letter-spacing="0.36">EP.2 Customizing</text><text x="4.20" y="96.48" fill="#000" font-size="8.6" letter-spacing="0.36">EP.2-1 Entwicklung</text><text x="4.20" y="108.62" fill="#000" font-size="8.6" letter-spacing="0.36">EP.2-2 Dokumentation</text><text x="4.20" y="120.76" fill="#000" font-size="8.6" letter-spacing="0.36">EP.2-3 Testen</text><text x="4.20" y="132.90" fill="#000" font-size="8.6" letter-spacing="0.36">EP.2-A Prototyp 27.02.2004</text><text x="4.20" y="145.04" fill="#000" font-size="8.6" letter-spacing="0.36">EP.3 Einf&uuml;hrung</text><text x="4.20" y="157.18" fill="#000" font-size="8.6" letter-spacing="0.36">EP.3-1 Installation</text><text x="4.20" y="169.32" fill="#000" font-size="8.6" letter-spacing="0.36">EP.3-2 Schulung</text><text x="4.20" y="181.46" fill="#000" font-size="8.6" letter-spacing="0.36">EP.3-A Systemabnahme 05.03.2004</text></svg><rect x="397" y="508.30" width="458.60" height="4.7" fill="#808080"/><polygon points="397,512.90 401.2,512.90 397,517.70" fill="#808080"/><polygon points="855.6,512.90 851.4,512.90 855.6,517.70" fill="#808080"/><rect x="397" y="519.34" width="458.60" height="6.8" fill="#a4a4ea"/><line x1="397" y1="520.24" x2="855.6" y2="520.24" stroke="#fff" stroke-width="0.8" stroke-dasharray="1.6 1"/><line x1="397" y1="525.14" x2="855.6" y2="525.14" stroke="#fff" stroke-width="0.7" stroke-dasharray="1.6 1"/><rect x="397.8" y="520.24" width="457.00" height="5" fill="url(#hatch)"/><rect x="397" y="520.94" width="405.00" height="3.3" fill="#000"/><rect x="397" y="532.58" width="154.70" height="4.7" fill="#808080"/><polygon points="397,537.18 401.2,537.18 397,541.98" fill="#808080"/><polygon points="551.7,537.18 547.5,537.18 551.7,541.98" fill="#808080"/><rect x="443.5" y="546.42" width="17.00" height="4.6" fill="#fff" stroke="#8c8c8c" stroke-width="1"/><rect x="397" y="543.62" width="46.50" height="6.8" fill="#a4a4ea"/><line x1="397" y1="544.52" x2="443.5" y2="544.52" stroke="#fff" stroke-width="0.8" stroke-dasharray="1.6 1"/><line x1="397" y1="549.42" x2="443.5" y2="549.42" stroke="#fff" stroke-width="0.7" stroke-dasharray="1.6 1"/><rect x="397" y="545.22" width="46.50" height="3.3" fill="#000"/><polyline points="416.00,550.72 416.00,559.16 428.00,559.16" fill="none" stroke="#8c8c8c" stroke-width="1.1"/><polygon points="427.5,554.16 433.0,559.66 427.5,565.16" fill="#808080"/><rect x="551.7" y="558.86" width="16.80" height="4.6" fill="#fff" stroke="#8c8c8c" stroke-width="1"/><rect x="432.5" y="555.76" width="119.20" height="6.8" fill="#a4a4ea"/><line x1="432.5" y1="556.66" x2="551.7" y2="556.66" stroke="#fff" stroke-width="0.8" stroke-dasharray="1.6 1"/><line x1="432.5" y1="561.56" x2="551.7" y2="561.56" stroke="#fff" stroke-width="0.7" stroke-dasharray="1.6 1"/><rect x="432.5" y="557.36" width="119.20" height="3.3" fill="#000"/><polyline points="523.90,563.36 523.90,571.80 536.00,571.80" fill="none" stroke="#8c8c8c" stroke-width="1.1"/><rect x="545" y="572.00" width="23.50" height="4.6" fill="#fff" stroke="#8c8c8c" stroke-width="1"/><polygon points="535.2,566.00 541.7,571.80 535.2,577.60" fill="#808080"/><polygon points="540,571.80 545,565.80 550,571.80 545,577.80" fill="#808080"/><polyline points="523.90,576.00 523.90,608.02 697.00,608.02" fill="none" stroke="#8c8c8c" stroke-width="1.1"/><polyline points="523.90,595.98 536.00,595.98" fill="none" stroke="#8c8c8c" stroke-width="1.1"/><rect x="541" y="581.14" width="260.50" height="4.7" fill="#808080"/><polygon points="541,585.74 545.2,585.74 541,590.54" fill="#808080"/><polygon points="801.5,585.74 797.3,585.74 801.5,590.54" fill="#808080"/><polygon points="535.2,590.58 540.7,596.08 535.2,601.58" fill="#808080"/><rect x="712" y="594.28" width="18.8" height="3.8" fill="#000"/><rect x="541" y="592.18" width="171.30" height="6.8" fill="#a4a4ea"/><line x1="541" y1="593.08" x2="712.3" y2="593.08" stroke="#fff" stroke-width="0.8" stroke-dasharray="1.6 1"/><line x1="541" y1="597.98" x2="712.3" y2="597.98" stroke="#fff" stroke-width="0.7" stroke-dasharray="1.6 1"/><rect x="541" y="593.78" width="171.30" height="3.3" fill="#000"/><polygon points="696.4,602.72 701.9,608.22 696.4,613.72" fill="#808080"/><rect x="702" y="604.32" width="82.60" height="6.8" fill="#a4a4ea"/><line x1="702" y1="605.22" x2="784.6" y2="605.22" stroke="#fff" stroke-width="0.8" stroke-dasharray="1.6 1"/><line x1="702" y1="610.12" x2="784.6" y2="610.12" stroke="#fff" stroke-width="0.7" stroke-dasharray="1.6 1"/><rect x="702" y="605.92" width="82.60" height="3.3" fill="#000"/><rect x="784.6" y="606.42" width="17.4" height="3.8" fill="#200"/><polyline points="684.50,620.56 684.50,612.42 802.00,612.42 802.00,605.62 784.60,605.62" fill="none" stroke="#e08070" stroke-width="1.1"/><polyline points="684.50,620.36 697.00,620.36" fill="none" stroke="#8c8c8c" stroke-width="1.1"/><rect x="702" y="616.46" width="82.60" height="6.8" fill="#a4a4ea"/><line x1="702" y1="617.36" x2="784.6" y2="617.36" stroke="#fff" stroke-width="0.8" stroke-dasharray="1.6 1"/><line x1="702" y1="622.26" x2="784.6" y2="622.26" stroke="#fff" stroke-width="0.7" stroke-dasharray="1.6 1"/><rect x="702.8" y="617.36" width="81.00" height="5" fill="url(#hatch)"/><rect x="720" y="618.06" width="64.60" height="3.3" fill="#000"/><polygon points="696.4,614.86 701.9,620.36 696.4,625.86" fill="#e82020"/><polyline points="684.50,620.56 684.50,632.10 714.00,632.10" fill="none" stroke="#8c8c8c" stroke-width="1.1"/><polyline points="729.00,632.10 742.60,632.10" fill="none" stroke="#8c8c8c" stroke-width="1.1"/><polyline points="742.60,626.20 742.60,637.70" fill="none" stroke="#808080" stroke-width="1.8"/><polyline points="742.60,632.10 747.20,632.10 747.20,636.20 774.20,636.20 774.20,656.88 786.00,656.88" fill="none" stroke="#8c8c8c" stroke-width="1.1"/><polygon points="713.8,626.30 720.3,632.10 713.8,637.90" fill="#808080"/><polygon points="724.6,626.30 718.6,632.10 724.6,637.90" fill="#808080"/><polygon points="725.2,627.70 729.4,632.10 725.2,636.50" fill="#999"/><rect x="791.5" y="641.84" width="64.20" height="4.7" fill="#808080"/><polygon points="791.5,646.44 795.7,646.44 791.5,651.24" fill="#808080"/><polygon points="855.7,646.44 851.5,646.44 855.7,651.24" fill="#808080"/><rect x="820" y="656.28" width="17.70" height="4.6" fill="#fff" stroke="#8c8c8c" stroke-width="1"/><rect x="791.5" y="652.88" width="28.50" height="6.8" fill="#a4a4ea"/><line x1="791.5" y1="653.78" x2="820" y2="653.78" stroke="#fff" stroke-width="0.8" stroke-dasharray="1.6 1"/><line x1="791.5" y1="658.68" x2="820" y2="658.68" stroke="#fff" stroke-width="0.7" stroke-dasharray="1.6 1"/><rect x="792.3" y="653.78" width="26.90" height="5" fill="url(#hatch)"/><rect x="809.5" y="654.48" width="10.50" height="3.3" fill="#000"/><polygon points="785.8,651.28 791.3,656.78 785.8,662.28" fill="#808080"/><polyline points="792.20,660.48 792.20,668.62 804.50,668.62" fill="none" stroke="#8c8c8c" stroke-width="1.1"/><rect x="855.7" y="668.42" width="17.30" height="4.6" fill="#fff" stroke="#8c8c8c" stroke-width="1"/><rect x="810" y="665.02" width="45.70" height="6.8" fill="#a4a4ea"/><line x1="810" y1="665.92" x2="855.7" y2="665.92" stroke="#fff" stroke-width="0.8" stroke-dasharray="1.6 1"/><line x1="810" y1="670.82" x2="855.7" y2="670.82" stroke="#fff" stroke-width="0.7" stroke-dasharray="1.6 1"/><rect x="810" y="666.62" width="45.70" height="3.3" fill="#000"/><rect x="855.7" y="667.32" width="54" height="3.6" fill="#000"/><polygon points="804.2,663.42 809.7,668.92 804.2,674.42" fill="#808080"/><polyline points="828.50,671.12 828.50,680.06 841.00,680.06" fill="none" stroke="#8c8c8c" stroke-width="1.1"/><polygon points="840,674.26 846.5,680.06 840,685.86" fill="#808080"/><polygon points="850.8,674.26 844.8,680.06 850.8,685.86" fill="#808080"/><polygon points="851.4,675.66 855.6,680.06 851.4,684.46" fill="#999"/><polyline points="904.20,674.26 904.20,686.40" fill="none" stroke="#808080" stroke-width="1.8"/></svg>
</body></html>
